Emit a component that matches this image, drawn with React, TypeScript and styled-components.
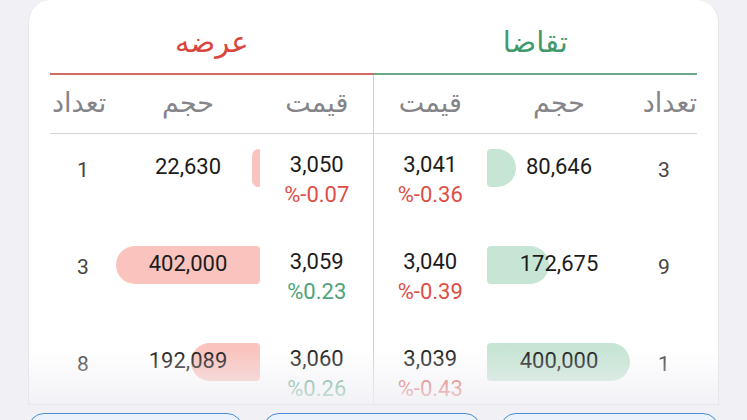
import React from "react";
import styled, { createGlobalStyle } from "styled-components";

const Global = createGlobalStyle`
  html, body { margin: 0; padding: 0; background: #f0f0f5; overflow: hidden; }
  body { font-family: Roboto, "DejaVu Sans", sans-serif; }
`;

const Page = styled.div`
  width: 747px;
  height: 420px;
  padding: 0 28px;
  box-sizing: border-box;
  display: flex;
  flex-direction: column;
  gap: 8px;
  overflow: hidden;
`;

const Card = styled.div`
  position: relative;
  height: 405px;
  flex-shrink: 0;
  background: #ffffff;
  border-radius: 22px 22px 0 0;
  border: 1px solid #e6e6ec;
  border-top: none;
  box-sizing: border-box;
  padding: 0 21px;
  overflow: hidden;
`;

const Halves = styled.div`
  display: flex;
`;

const Half = styled.div`
  width: 324px;
  display: flex;
  flex-direction: column;
`;

const Title = styled.div<{ $side: "ask" | "bid" }>`
  height: 75px;
  display: flex;
  align-items: center;
  justify-content: center;
  padding-top: 10px;
  box-sizing: border-box;
  font-family: "DejaVu Sans", sans-serif;
  font-size: 29px;
  color: ${(p) => (p.$side === "ask" ? "#d8463e" : "#3f9a6c")};
  border-bottom: 2px solid ${(p) => (p.$side === "ask" ? "#d36a63" : "#6aa888")};
`;

const Body = styled.div<{ $side: "ask" | "bid" }>`
  border-left: ${(p) => (p.$side === "bid" ? "1px solid #cfcfd4" : "none")};
  margin-left: ${(p) => (p.$side === "bid" ? "-1px" : "0")};
`;

const Row = styled.div<{ $side: "ask" | "bid" }>`
  display: grid;
  grid-template-columns: ${(p) => (p.$side === "ask" ? "66px 144px 1fr" : "1fr 144px 66px")};
  align-items: start;
`;

const HeadRow = styled(Row)`
  height: 58px;
  align-items: center;
  border-bottom: 1px solid #d4d4d9;
`;

const HeadCell = styled.div<{ $align: "left" | "center" | "right" }>`
  font-family: "DejaVu Sans", sans-serif;
  font-size: 27px;
  color: #858589;
  text-align: ${(p) => p.$align};
  padding: ${(p) => (p.$align === "left" ? "0 0 0 2px" : "0")};
  padding-bottom: 4px;
`;

const DataRow = styled(Row)`
  height: 97px;
  padding-top: 15px;
  box-sizing: border-box;
`;

const Count = styled.div`
  height: 38px;
  display: flex;
  align-items: center;
  justify-content: center;
  font-size: 21px;
  color: #444;
  padding-top: 2px;
`;

const VolumeCell = styled.div`
  position: relative;
  height: 38px;
  display: flex;
  align-items: center;
  justify-content: center;
`;

const Bar = styled.div<{ $side: "ask" | "bid" }>`
  position: absolute;
  top: 0;
  bottom: 0;
  ${(p) => (p.$side === "ask" ? "right: 0;" : "left: 0;")}
  background: ${(p) => (p.$side === "ask" ? "#fac3bd" : "#c7e5d5")};
  border-radius: ${(p) => (p.$side === "ask" ? "19px 4px 4px 19px" : "4px 19px 19px 4px")};
`;

const Volume = styled.span`
  position: relative;
  font-size: 22px;
  color: #1c1c1c;
  margin-top: -3px;
`;

const PriceCell = styled.div`
  display: flex;
  flex-direction: column;
  align-items: center;
`;

const Price = styled.div`
  font-size: 22px;
  line-height: 30px;
  color: #1c1c1c;
  margin-top: 1px;
`;

const Change = styled.div<{ $up: boolean }>`
  font-size: 22px;
  line-height: 30px;
  color: ${(p) => (p.$up ? "#4ea47a" : "#dd4f47")};
`;

const Fade = styled.div`
  position: absolute;
  left: 0;
  right: 0;
  bottom: 0;
  height: 55px;
  background: linear-gradient(to bottom, rgba(240, 240, 245, 0), rgba(240, 240, 245, 0.85));
  pointer-events: none;
`;

const Buttons = styled.div`
  display: grid;
  grid-template-columns: 215px 218px 219px;
  justify-content: space-between;
`;

const Btn = styled.div`
  height: 40px;
  border: 1.5px solid #4a8fd6;
  background: #eaf2fc;
  border-radius: 16px;
  box-sizing: border-box;
`;

type Level = { count: number; volume: number; price: string; change: string; up: boolean };

const asks: Level[] = [
  { count: 1, volume: 22630, price: "3,050", change: "%-0.07", up: false },
  { count: 3, volume: 402000, price: "3,059", change: "%0.23", up: true },
  { count: 8, volume: 192089, price: "3,060", change: "%0.26", up: true },
];

const bids: Level[] = [
  { count: 3, volume: 80646, price: "3,041", change: "%-0.36", up: false },
  { count: 9, volume: 172675, price: "3,040", change: "%-0.39", up: false },
  { count: 1, volume: 400000, price: "3,039", change: "%-0.43", up: false },
];

const MAX = 402000;
const fmt = (n: number) => n.toLocaleString("en-US");

function Side({ side, levels }: { side: "ask" | "bid"; levels: Level[] }) {
  const heads =
    side === "ask"
      ? [
          { t: "تعداد", a: "left" as const },
          { t: "حجم", a: "center" as const },
          { t: "قيمت", a: "center" as const },
        ]
      : [
          { t: "قيمت", a: "center" as const },
          { t: "حجم", a: "center" as const },
          { t: "تعداد", a: "right" as const },
        ];
  return (
    <Half>
      <Title $side={side}>{side === "ask" ? "عرضه" : "تقاضا"}</Title>
      <Body $side={side}>
        <HeadRow $side={side}>
          {heads.map((h) => (
            <HeadCell key={h.t} $align={h.a}>
              {h.t}
            </HeadCell>
          ))}
        </HeadRow>
        {levels.map((l, i) => {
          const count = <Count>{l.count}</Count>;
          const vol = (
            <VolumeCell>
              <Bar $side={side} style={{ width: `${(l.volume / MAX) * 100}%` }} />
              <Volume>{fmt(l.volume)}</Volume>
            </VolumeCell>
          );
          const price = (
            <PriceCell>
              <Price>{l.price}</Price>
              <Change $up={l.up}>{l.change}</Change>
            </PriceCell>
          );
          return (
            <DataRow $side={side} key={i}>
              {side === "ask" ? (
                <>
                  {count}
                  {vol}
                  {price}
                </>
              ) : (
                <>
                  {price}
                  {vol}
                  {count}
                </>
              )}
            </DataRow>
          );
        })}
      </Body>
    </Half>
  );
}

export default function App() {
  return (
    <>
      <Global />
      <Page>
        <Card>
          <Halves>
            <Side side="ask" levels={asks} />
            <Side side="bid" levels={bids} />
          </Halves>
          <Fade />
        </Card>
        <Buttons>
          <Btn />
          <Btn />
          <Btn />
        </Buttons>
      </Page>
    </>
  );
}
